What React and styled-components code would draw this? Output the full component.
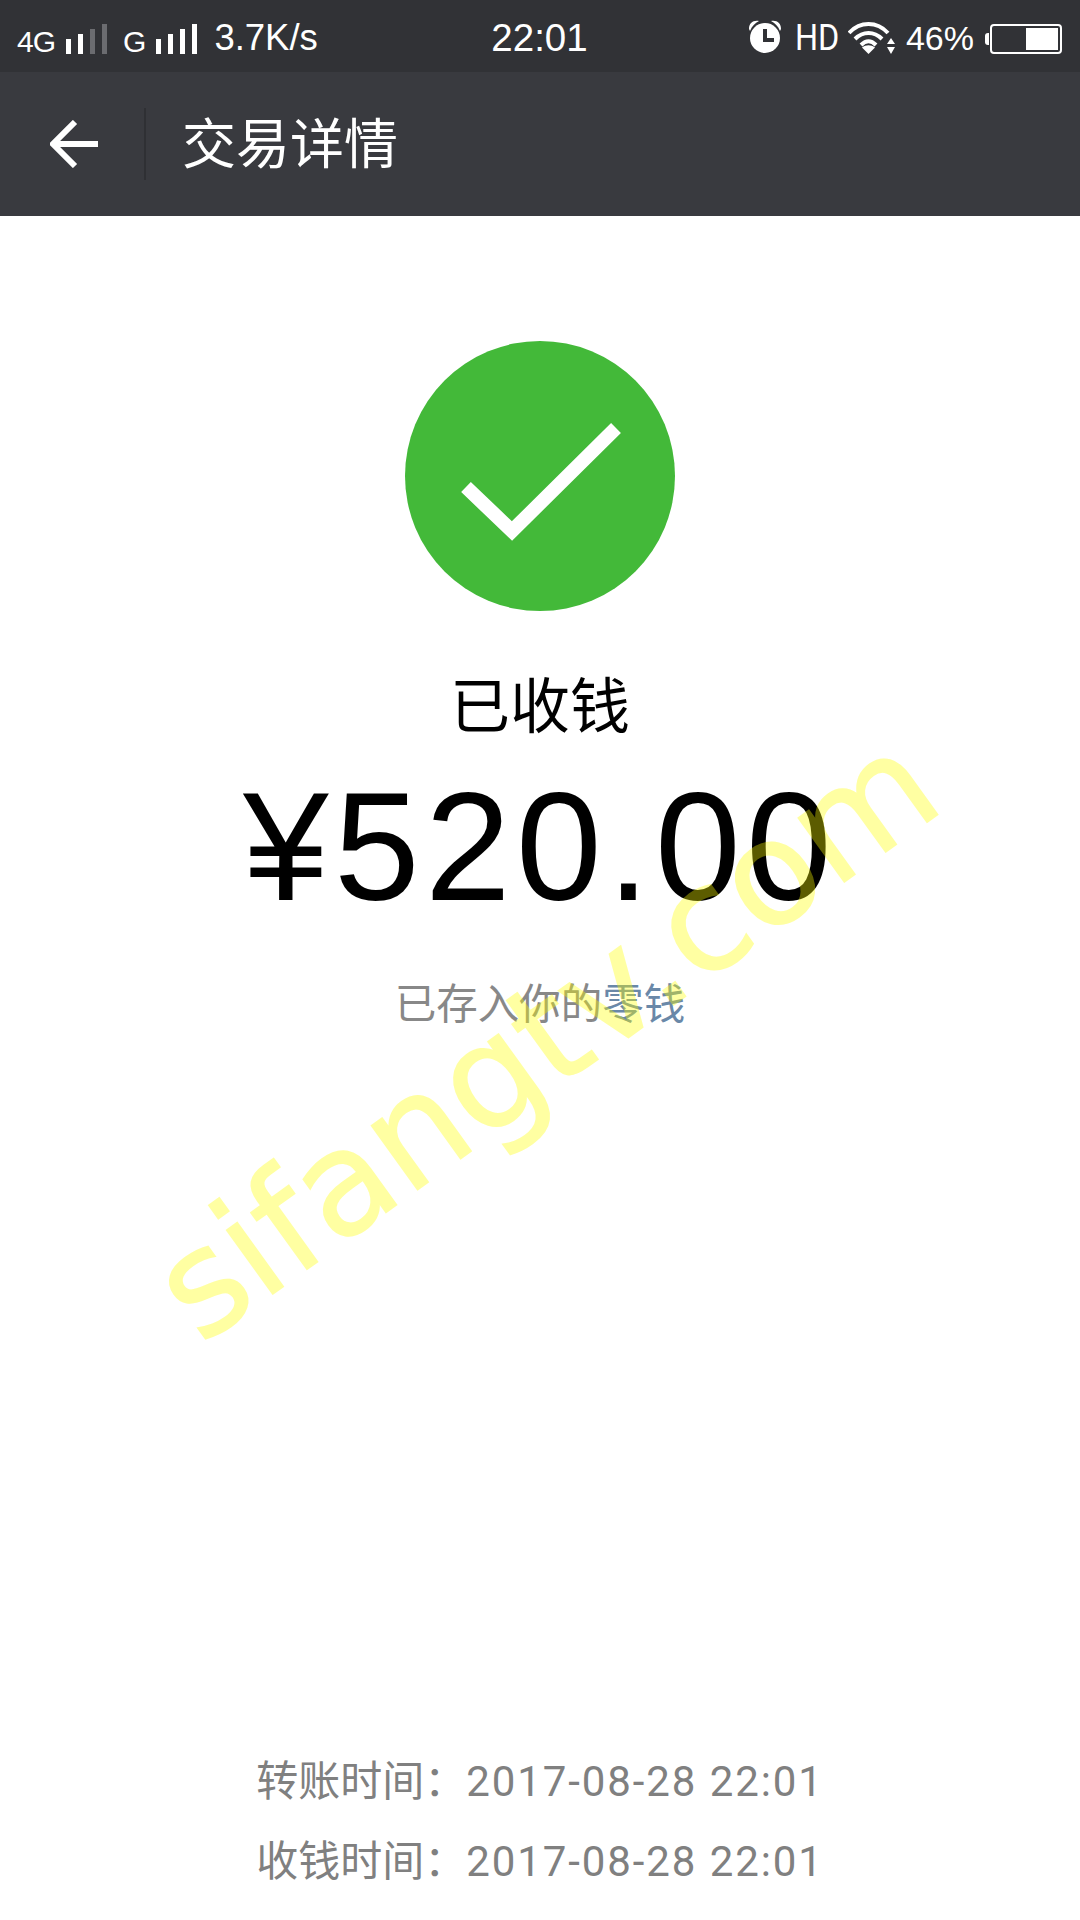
import React from 'react';
import styled, { createGlobalStyle } from 'styled-components';

const GlobalStyle = createGlobalStyle`
  html, body {
    margin: 0;
    padding: 0;
    background: #fff;
  }
  body {
    font-family: "Liberation Sans", "Noto Sans CJK SC", sans-serif;
  }
`;

const Page = styled.div`
  position: relative;
  display: flex;
  flex-direction: column;
  width: 1080px;
  height: 1920px;
  overflow: hidden;
  background: #fff;
`;

const StatusBar = styled.div`
  display: grid;
  grid-template-columns: 1fr auto 1fr;
  align-items: center;
  height: 72px;
  padding: 0 18px 0 17px;
  box-sizing: border-box;
  background: #313236;
  color: #fff;
`;

const StatusGroup = styled.div`
  display: flex;
  align-items: flex-end;
  justify-content: ${(p) => (p.$end ? 'flex-end' : 'flex-start')};
  height: 72px;
  padding-bottom: 18px;
  box-sizing: border-box;
`;

const NetLabel = styled.span`
  font-size: 30px;
  line-height: 30px;
  margin-right: 11px;
  margin-bottom: -3px;
  margin-left: ${(p) => p.$gap || 0}px;
  letter-spacing: -1px;
`;

const Signal = styled.div`
  display: flex;
  align-items: flex-end;
  gap: 7px;
  height: 30px;
`;

const SignalBar = styled.i`
  display: block;
  width: 5px;
  height: ${(p) => p.$h}px;
  background: ${(p) => (p.$dim ? '#6b6c70' : '#fff')};
`;

const Speed = styled.span`
  margin-left: 17px;
  margin-bottom: -2px;
  font-size: 36.5px;
  line-height: 36px;
`;

const Clock = styled.span`
  margin-top: 4px;
  font-size: 38.5px;
  line-height: 44px;
`;

const StatusText = styled.span`
  font-size: 34px;
  line-height: 36px;
  margin-bottom: -2px;
  margin-left: 11px;
`;

const HdLabel = styled.span`
  display: block;
  width: 44px;
  margin-left: 13px;
  margin-bottom: -2px;
  font-family: Roboto, sans-serif;
  font-size: 36px;
  line-height: 36px;
  transform: scaleX(0.9);
  transform-origin: left center;
`;

const StatusIcon = styled.svg`
  display: block;
  flex: none;
  margin-left: ${(p) => p.$gap || 0}px;
`;

const Battery = styled.div`
  display: flex;
  align-items: center;
  margin-left: 11px;
  height: 30px;
`;

const BatteryTip = styled.i`
  display: block;
  width: 4px;
  height: 12px;
  margin-right: 1px;
  border-radius: 3px 0 0 3px;
  background: #fff;
`;

const BatteryBody = styled.div`
  display: flex;
  justify-content: flex-end;
  width: 72px;
  height: 30px;
  padding: 2px;
  box-sizing: border-box;
  border: 2px solid #fff;
  border-radius: 4px;
`;

const BatteryLevel = styled.i`
  display: block;
  width: 32px;
  background: #fff;
`;

const Header = styled.header`
  display: flex;
  align-items: center;
  height: 144px;
  background: #393a3f;
`;

const BackButton = styled.div`
  display: flex;
  align-items: center;
  justify-content: center;
  width: 144px;
  height: 72px;
  padding-left: 3px;
  box-sizing: content-box;
  margin-left: -3px;
  border-right: 2px solid #2f3034;
`;

const BackIcon = styled.svg`
  display: block;
  margin-left: 3px;
`;

const Title = styled.h1`
  margin: 2px 0 0 36px;
  font-size: 54px;
  line-height: 72px;
  font-weight: 400;
  color: #fff;
`;

const Main = styled.main`
  display: flex;
  flex: 1;
  flex-direction: column;
  align-items: center;
  padding-top: 125px;
`;

const SuccessIcon = styled.svg`
  display: block;
  width: 270px;
  height: 270px;
`;

const State = styled.div`
  margin-top: 57px;
  font-size: 60px;
  line-height: 80px;
  color: #000;
`;

const Amount = styled.div`
  margin-top: 19px;
  font-size: 154px;
  line-height: 160px;
  letter-spacing: 5.3px;
  color: #000;
`;

const Note = styled.div`
  margin-top: 48px;
  font-size: 41.5px;
  line-height: 60px;
  color: #888;
`;

const Change = styled.span`
  color: #6a88a8;
`;

const Times = styled.div`
  margin-top: auto;
  padding-bottom: 18px;
`;

const TimeRow = styled.div`
  font-size: 42px;
  line-height: 80px;
  color: #808080;
  white-space: nowrap;
`;

const TimeValue = styled.span`
  font-family: Roboto, "Liberation Sans", sans-serif;
  letter-spacing: 1.9px;
`;

const Watermark = styled.div`
  position: absolute;
  left: 545px;
  top: 1036px;
  transform: translate(-50%, -50%) rotate(-35.8deg);
  font-family: "DejaVu Sans", sans-serif;
  font-size: 144px;
  line-height: 1;
  color: #ffff00;
  -webkit-text-stroke: 1.5px #ffff00;
  opacity: 0.36;
  white-space: nowrap;
  pointer-events: none;
`;

const Bars = ({ dim = 0 }) => {
  const heights = [15, 20, 25, 30];
  return (
    <Signal>
      {heights.map((h, i) => (
        <SignalBar key={h} $h={h} $dim={i >= heights.length - dim} />
      ))}
    </Signal>
  );
};

const Alarm = () => (
  <StatusIcon width="34" height="34" viewBox="0 0 34 34" fill="#fff">
    <path d="M1 9 C1 3 5 0 11 1 C7 3 4 6 2 11 Z" />
    <path d="M33 9 C33 3 29 0 23 1 C27 3 30 6 32 11 Z" />
    <circle cx="17" cy="18" r="15" />
    <path d="M15 9h4v9h7v4H15z" fill="#313236" />
  </StatusIcon>
);

const Wifi = () => (
  <StatusIcon $gap={9} width="47" height="33" viewBox="0 0 47 33" fill="none" stroke="#fff" strokeWidth="4">
    <path d="M1 12 C12 0 29 0 40 12" />
    <path d="M7 18 C15 10 26 10 34 18" />
    <path d="M13 24 C18 19 23 19 28 24" />
    <path d="M20.5 33 L14 26.5 C18 23.5 23 23.5 27 26.5 Z" fill="#fff" stroke="none" />
    <path d="M43 17 L47 23 H39 Z M39 26 H47 L43 33 Z" fill="#fff" stroke="none" />
  </StatusIcon>
);

export default function App() {
  return (
    <Page>
      <GlobalStyle />
      <StatusBar>
        <StatusGroup>
          <NetLabel>4G</NetLabel>
          <Bars dim={2} />
          <NetLabel $gap={16}>G</NetLabel>
          <Bars />
          <Speed>3.7K/s</Speed>
        </StatusGroup>
        <Clock>22:01</Clock>
        <StatusGroup $end>
          <Alarm />
          <HdLabel>HD</HdLabel>
          <Wifi />
          <StatusText>46%</StatusText>
          <Battery>
            <BatteryTip />
            <BatteryBody>
              <BatteryLevel />
            </BatteryBody>
          </Battery>
        </StatusGroup>
      </StatusBar>
      <Header>
        <BackButton>
          <BackIcon width="48" height="48" viewBox="0 0 48 48" fill="none" stroke="#fff" strokeWidth="6">
            <path d="M48 24H4" />
            <path d="M25 2L3 24l22 22" />
          </BackIcon>
        </BackButton>
        <Title>交易详情</Title>
      </Header>
      <Main>
        <SuccessIcon viewBox="0 0 270 270">
          <circle cx="135" cy="135" r="135" fill="#43b939" />
          <path d="M61 146L107 190L211 87" fill="none" stroke="#fff" strokeWidth="14" />
        </SuccessIcon>
        <State>已收钱</State>
        <Amount>¥520.00</Amount>
        <Note>
          已存入你的<Change>零钱</Change>
        </Note>
        <Times>
          <TimeRow>转账时间：<TimeValue>2017-08-28 22:01</TimeValue></TimeRow>
          <TimeRow>收钱时间：<TimeValue>2017-08-28 22:01</TimeValue></TimeRow>
        </Times>
      </Main>
      <Watermark>sifangtv.com</Watermark>
    </Page>
  );
}
